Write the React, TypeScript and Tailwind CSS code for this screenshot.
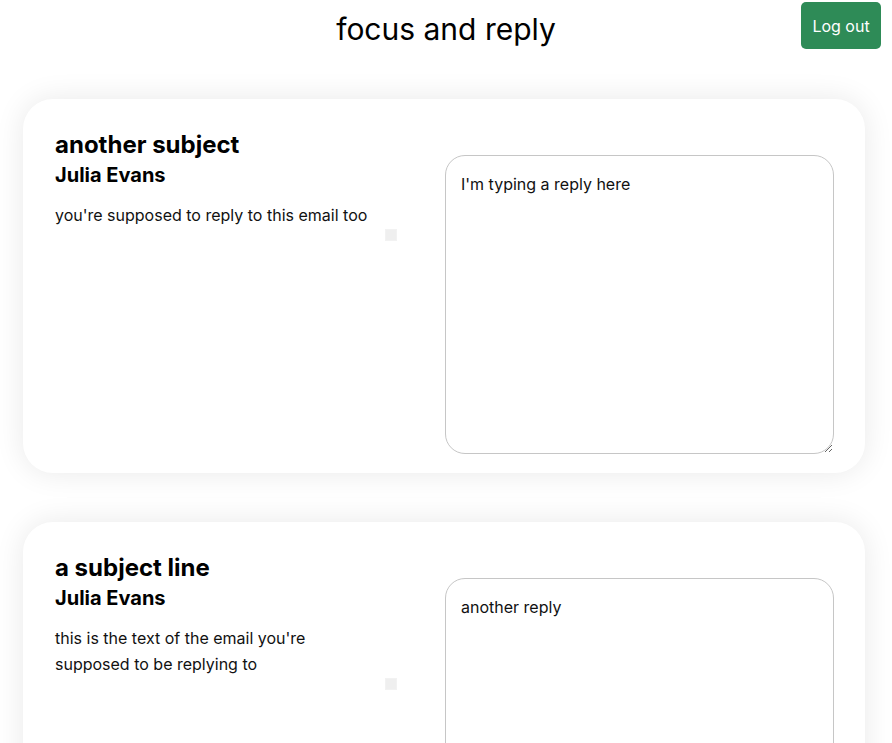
import React from "react";

const emails = [
  {
    subject: "another subject",
    from: "Julia Evans",
    body: "you're supposed to reply to this email too",
    reply: "I'm typing a reply here",
  },
  {
    subject: "a subject line",
    from: "Julia Evans",
    body: "this is the text of the email you're supposed to be replying to",
    reply: "another reply",
  },
];

function EmailCard({ email }: { email: (typeof emails)[number] }) {
  return (
    <div className="w-[842px] mx-[23px] bg-white rounded-[30px] shadow-[0_0_30px_rgba(0,0,0,0.09)] pt-[31px] pb-[19px] px-[32px] grid grid-cols-2">
      <div>
        <h2 className="text-[24px] font-bold leading-[29px] text-black">{email.subject}</h2>
        <h3 className="text-[20px] font-bold leading-[24px] mt-[4px] text-black">{email.from}</h3>
        <div className="w-[342px] mt-[15px]">
          <p className="text-[16px] leading-[26px] text-[#111] max-w-[320px]">{email.body}</p>
          <div className="flex justify-end mt-[1px]">
            <button className="w-[12px] h-[12px] bg-[#efefef] border border-[#f2f2f2]"></button>
          </div>
        </div>
      </div>
      <div className="pt-[25px] pl-[1px]">
        <textarea
          defaultValue={email.reply}
          className="block w-[389px] h-[299px] border border-[#c6c6c6] rounded-[20px] px-[15px] py-[18px] text-[16px] leading-[20px] text-[#111] outline-none"
        />
      </div>
    </div>
  );
}

export default function App() {
  return (
    <div className="min-h-screen bg-white text-black" style={{ fontFamily: "Inter, 'Noto Sans', sans-serif" }}>
      <div className="relative h-[99px]">
        <h1 className="text-center text-[30px] leading-[36px] pt-[11px] font-normal">focus and reply</h1>
        <button className="absolute right-[11px] top-[2px] w-[80px] h-[47px] rounded-[5px] bg-[#2e8b57] text-white text-[16px]">
          Log out
        </button>
      </div>
      <div className="flex flex-col gap-[49px] pb-10">
        {emails.map((e) => (
          <EmailCard key={e.subject} email={e} />
        ))}
      </div>
    </div>
  );
}
